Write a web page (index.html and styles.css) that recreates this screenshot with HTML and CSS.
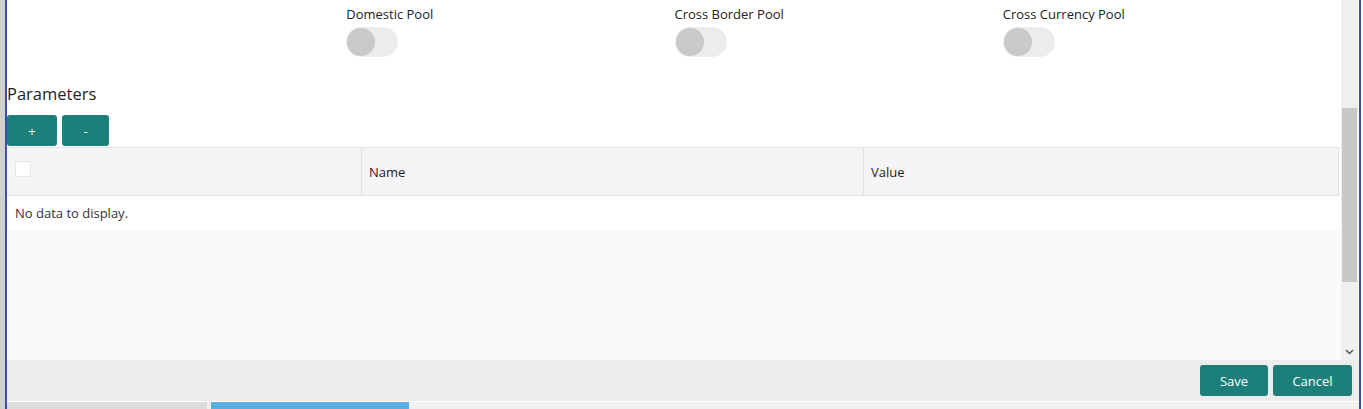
FILE: index.html
```html
<!DOCTYPE html>
<html>
<head>
<meta charset="utf-8">
<link rel="stylesheet" href="styles.css">
</head>
<body>
<div class="window">
  <div class="edge-left"></div>
  <div class="main">
    <div class="scroll-area">
      <div class="content">
        <div class="toggles">
          <div class="toggle-cell"></div>
          <div class="toggle-cell">
            <div class="toggle-label">Domestic Pool</div>
            <div class="switch"><span class="knob"></span></div>
          </div>
          <div class="toggle-cell">
            <div class="toggle-label">Cross Border Pool</div>
            <div class="switch"><span class="knob"></span></div>
          </div>
          <div class="toggle-cell">
            <div class="toggle-label">Cross Currency Pool</div>
            <div class="switch"><span class="knob"></span></div>
          </div>
        </div>
        <div class="section-title">Parameters</div>
        <div class="actions">
          <button class="btn btn-add">+</button>
          <button class="btn btn-remove">-</button>
        </div>
        <div class="table">
          <div class="thead">
            <div class="th th-check"><span class="checkbox"></span></div>
            <div class="th th-name">Name</div>
            <div class="th th-value">Value</div>
          </div>
          <div class="empty-row">No data to display.</div>
        </div>
        <div class="filler"></div>
      </div>
      <div class="scrollbar">
        <div class="track-top"></div>
        <div class="thumb"></div>
        <div class="track-bottom"></div>
        <div class="arrow-down">
          <svg width="9" height="6" viewBox="0 0 9 6"><path d="M1 1 L4.5 4.5 L8 1" fill="none" stroke="#555" stroke-width="1.5"/></svg>
        </div>
      </div>
    </div>
    <div class="footer">
      <button class="btn btn-save">Save</button>
      <button class="btn btn-cancel">Cancel</button>
    </div>
    <div class="bottom-strip">
      <div class="tab tab-grey"></div>
      <div class="tab tab-gap"></div>
      <div class="tab tab-blue"></div>
      <div class="tab tab-rest"></div>
    </div>
  </div>
  <div class="edge-right"></div>
</div>
</body>
</html>
```

FILE: styles.css
```css
html, body {
  margin: 0;
  padding: 0;
  background: #ffffff;
}
body {
  font-family: "Open Sans", "Noto Sans", sans-serif;
  color: #222;
  overflow: hidden;
}
.window {
  display: flex;
  height: 409px;
  width: 1363px;
}
.edge-left {
  width: 5px;
  background: #d0d0d0;
  border-right: 2px solid #3d4ea3;
  flex: none;
}
.edge-right {
  width: 2px;
  background: #ffffff;
  border-left: 2px solid #3d4ea3;
  flex: none;
}
.main {
  flex: 1;
  display: flex;
  flex-direction: column;
  min-width: 0;
}
.scroll-area {
  height: 360px;
  display: flex;
  flex: none;
}
.content {
  flex: 1;
  display: flex;
  flex-direction: column;
  min-width: 0;
}
.toggles {
  display: grid;
  grid-template-columns: repeat(4, 1fr);
  padding: 5px 10px 0 11px;
  height: 76px;
  box-sizing: border-box;
}
.toggle-label {
  font-size: 13px;
  line-height: 18px;
  color: #222;
  white-space: nowrap;
}
.switch {
  margin-top: 4px;
  width: 52px;
  height: 30px;
  border-radius: 15px;
  background: #ececee;
  position: relative;
}
.knob {
  position: absolute;
  left: 1px;
  top: 1px;
  width: 28px;
  height: 28px;
  border-radius: 50%;
  background: #c9c9cb;
}
.section-title {
  font-size: 16.5px;
  line-height: 24px;
  color: #1e1e1e;
  padding-top: 6px;
  height: 39px;
  box-sizing: border-box;
}
.actions {
  display: flex;
  gap: 5px;
  height: 32px;
}
.btn {
  border: none;
  border-radius: 3px;
  background: #1c7f79;
  color: #fff;
  font-family: "Open Sans", "Noto Sans", sans-serif;
  font-size: 13px;
  padding: 0;
  cursor: pointer;
}
.btn-add {
  width: 50px;
  height: 31px;
}
.btn-remove {
  width: 47px;
  height: 31px;
}
.table {
  margin-right: 2px;
}
.thead {
  display: grid;
  grid-template-columns: 354px 502px 1fr;
  height: 49px;
  background: #f5f5f7;
  border-top: 1px solid #e2e2e4;
  border-bottom: 1px solid #e2e2e4;
  border-right: 1px solid #e2e2e4;
  box-sizing: border-box;
}
.th {
  display: flex;
  align-items: center;
  font-size: 13px;
  color: #222;
  padding-left: 7px;
  border-left: 1px solid #e2e2e4;
}
.th-check {
  border-left: none;
  padding-left: 8px;
  align-items: flex-start;
  padding-top: 13px;
}
.checkbox {
  width: 14px;
  height: 14px;
  background: #fff;
  border: 1px solid #e6e6e8;
  border-radius: 2px;
}
.empty-row {
  height: 34px;
  display: flex;
  align-items: center;
  padding-left: 8px;
  font-size: 13px;
  color: #333;
  background: #fff;
}
.filler {
  flex: 1;
  background: #fafafc;
}
.scrollbar {
  width: 17px;
  flex: none;
  background: #f0f0f0;
  display: flex;
  flex-direction: column;
  align-items: center;
  margin-right: 1px;
}
.track-top {
  height: 108px;
}
.thumb {
  width: 15px;
  height: 174px;
  background: #c8c8c8;
}
.track-bottom {
  flex: 1;
}
.arrow-down {
  height: 17px;
  display: flex;
  align-items: center;
  justify-content: center;
}
.footer {
  height: 41px;
  background: #ededed;
  display: flex;
  justify-content: flex-end;
  align-items: flex-start;
  gap: 5px;
  padding: 5px 7px 0 0;
  box-sizing: border-box;
  flex: none;
}
.btn-save {
  width: 68px;
  height: 31px;
}
.btn-cancel {
  width: 79px;
  height: 31px;
}
.bottom-strip {
  flex: 1;
  display: flex;
  border-top: 1px solid #fff;
  background: #f0f0f0;
}
.tab-grey {
  width: 200px;
  background: #dcdcdc;
}
.tab-gap {
  width: 4px;
  background: #f0f0f0;
}
.tab-blue {
  width: 198px;
  background: #5aaee3;
}
.tab-rest {
  flex: 1;
}
```
